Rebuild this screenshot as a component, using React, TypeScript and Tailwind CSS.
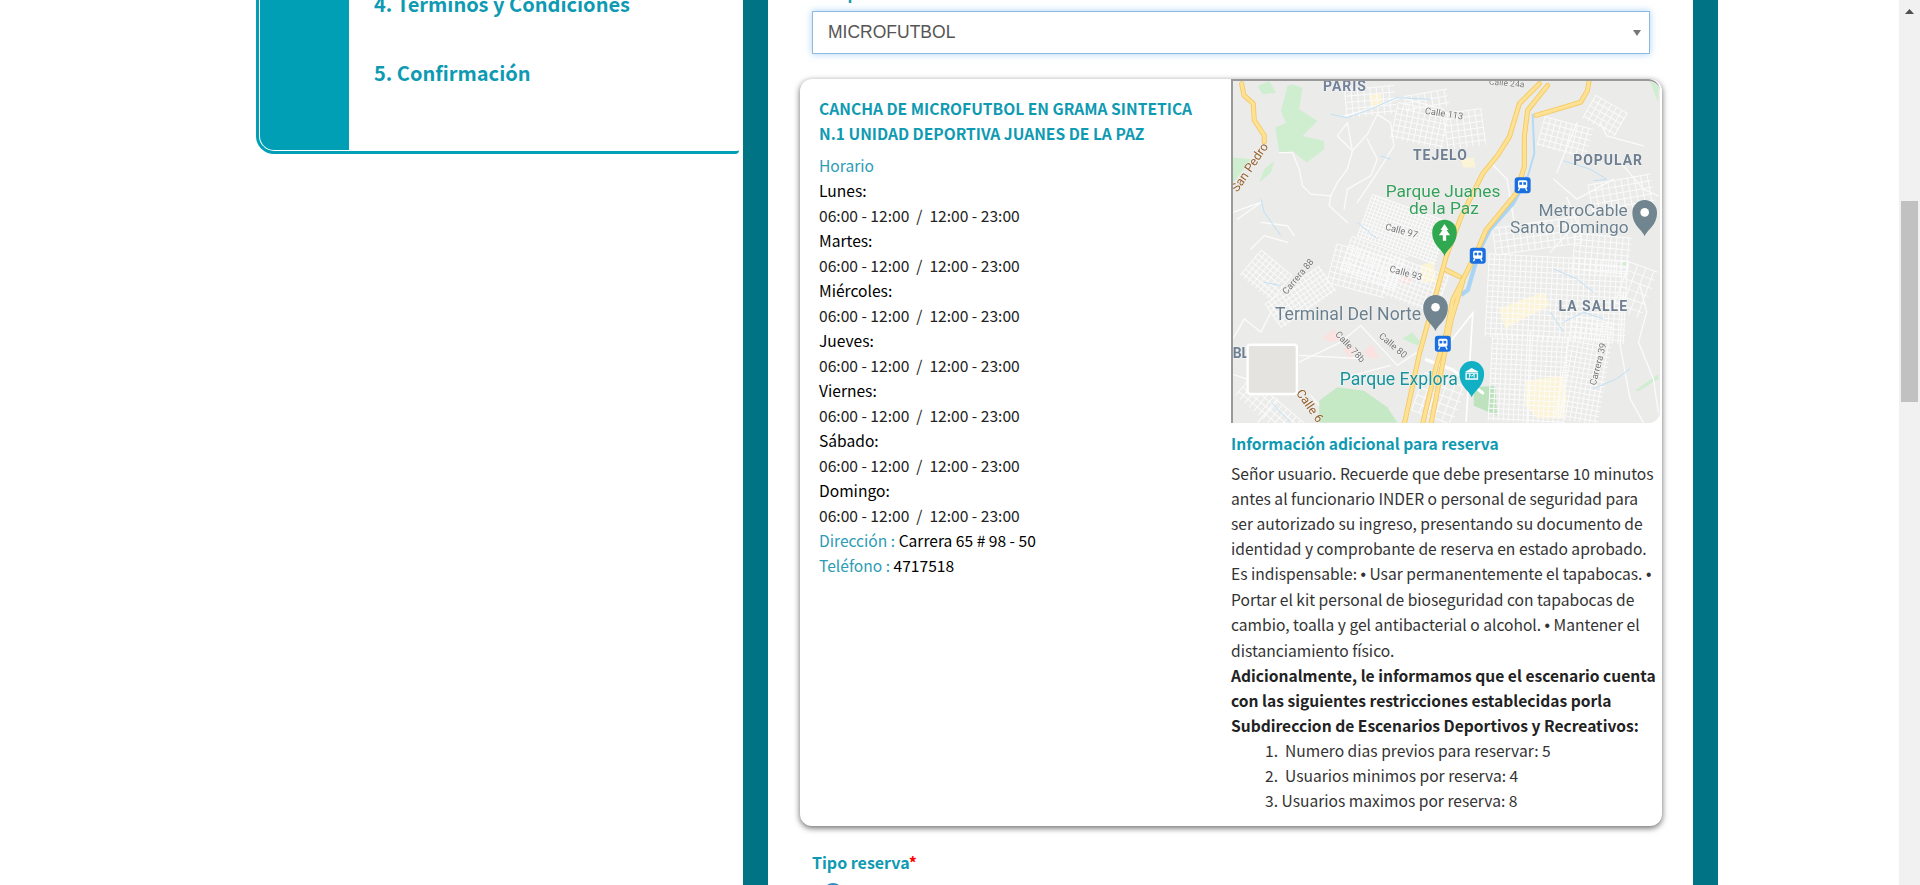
import React from "react";

const days = ["Lunes", "Martes", "Miércoles", "Jueves", "Viernes", "Sábado", "Domingo"];

// [x, y, w, h, rotation, step] in map units (3x pixels)
const grids: number[][] = [
  [345, 25, 150, 85, -5, 19],
  [490, 85, 160, 110, 12, 17],
  [645, 95, 115, 110, -8, 19],
  [525, 40, 130, 50, -10, 20],
  [395, 385, 250, 135, 20, 11],
  [340, 500, 180, 110, 20, 13],
  [470, 560, 170, 120, 20, 14],
  [45, 540, 120, 100, 40, 15],
  [110, 610, 200, 90, -35, 14],
  [300, 516, 180, 120, 15, 17],
  [930, 130, 150, 90, 15, 17],
  [1070, 70, 110, 80, 30, 18],
  [1080, 300, 190, 90, -10, 20],
  [770, 535, 420, 250, 3, 16],
  [780, 770, 230, 262, 3, 15],
  [1000, 720, 130, 312, 10, 15],
  [1030, 470, 170, 120, 5, 18],
  [790, 430, 260, 80, -8, 20],
  [560, 900, 130, 120, 20, 24],
  [10, 960, 220, 70, 40, 18],
  [1170, 560, 90, 150, 20, 26],
];

const whiteRoads = [
  "M145 220 L185 220 L205 270 L215 320 L240 345 L300 350 L320 310 L350 270 L365 215 L350 130 L320 170 L360 210",
  "M5 400 L90 370 L20 420 M90 430 L170 440 L190 470 M60 510 L100 470 L170 490",
  "M300 350 L295 380 L350 430 M365 215 L410 165 L440 105 L480 130 L490 200 L440 280 L380 370",
  "M340 110 L430 85 L510 55 L640 90 M410 180 L440 240 L420 290 L350 330 L340 390",
  "M0 885 L60 905 M205 850 L330 790 L390 740 L500 860 L560 820 M205 830 L400 840 M330 900 L480 860",
  "M280 1000 L240 950 M80 1032 L140 960 M0 790 L40 720 L90 760 L120 700",
  "M1110 130 L1130 170 L1240 200 M1180 260 L1240 330 L1285 350 M1040 130 L980 280",
  "M1010 355 L1040 430 L960 520 M1180 640 L1170 800 L1200 960 L1240 1032",
  "M1230 620 L1250 700 L1225 790 L1270 900 L1285 1000 M780 250 L830 300 L850 420",
  "M900 760 L890 1032 M970 300 L1040 360 L1150 300",
];

const creeks = [
  "M300 105 L350 115 L430 85 L500 55 L600 60",
  "M450 230 L480 240 M1000 245 L1080 270 L1130 300 L1090 305",
  "M90 360 L100 400 L150 470 M100 610 L150 620 M380 430 L440 480",
  "M970 570 L1040 600 L1090 640 M1000 730 L1060 700 L1120 720 M960 700 L1000 760",
  "M1200 870 L1160 900 L1090 930 M120 970 L180 1032",
];

const yellowZones = [
  "M415 50 L450 40 L455 75 L425 85 Z",
  "M805 690 L880 660 L940 640 L960 680 L880 720 L825 750 Z",
  "M885 906 L1000 890 L1010 960 L1000 1020 L920 1020 L885 980 Z",
  "M570 560 L610 545 L615 610 L575 610 Z",
  "M690 240 L730 235 L735 265 L700 265 Z",
];

const highways = [
  "M65 70 L72 105 L100 130 L103 180 L133 225 L133 245",
  "M960 70 L900 130 L870 230 L835 285 L790 340 L725 470 L680 590 L650 700 L600 880 L555 1090",
  "M985 75 L925 150 L915 230 L915 320 L890 400 L800 510 L770 580 L735 650 L700 720 L680 820 L650 920 L610 1090",
  "M730 665 L695 780 L660 960 L635 1090",
  "M950 165 L1020 145 L1085 125 L1105 90 L1110 60",
  "M680 630 L720 650",
];

function Grid({ x, y, w, h, r, step }: { x: number; y: number; w: number; h: number; r: number; step: number }) {
  const cols = Array.from({ length: Math.floor(w / step) + 1 }, (_, i) => i * step);
  const rows = Array.from({ length: Math.floor(h / step) + 1 }, (_, i) => i * step);
  return (
    <g transform={`rotate(${r} ${x + w / 2} ${y + h / 2})`} stroke="#fbfbfb" strokeWidth="3">
      {cols.map((c) => (
        <line key={`c${c}`} x1={x + c} y1={y} x2={x + c} y2={y + h} />
      ))}
      {rows.map((c) => (
        <line key={`r${c}`} x1={x} y1={y + c} x2={x + w} y2={y + c} />
      ))}
    </g>
  );
}

function Pin({ x, y, fill }: { x: number; y: number; fill: string }) {
  return <path d={`M${x} ${y + 72} C${x - 8} ${y + 50} ${x - 37} ${y + 40} ${x - 37} ${y} A37 37 0 1 1 ${x + 37} ${y} C${x + 37} ${y + 40} ${x + 8} ${y + 50} ${x} ${y + 72} Z`} fill={fill} />;
}

function Metro({ x, y }: { x: number; y: number }) {
  return (
    <g>
      <rect x={x - 24} y={y - 24} width="48" height="48" rx="9" fill="#1a6fe0" />
      <rect x={x - 14} y={y - 15} width="28" height="24" rx="5" fill="#fff" />
      <rect x={x - 10} y={y - 9} width="8" height="8" fill="#1a6fe0" />
      <rect x={x + 2} y={y - 9} width="8" height="8" fill="#1a6fe0" />
      <path d={`M${x - 9} ${y + 9} L${x - 13} ${y + 17} M${x + 9} ${y + 9} L${x + 13} ${y + 17}`} stroke="#fff" strokeWidth="4" />
    </g>
  );
}

function MapLabel({ x, y, size, fill, rotate = 0, bold = false, spacing = 0, children }: { x: number; y: number; size: number; fill: string; rotate?: number; bold?: boolean; spacing?: number; children: React.ReactNode }) {
  return (
    <text x={x} y={y} fontSize={size} fill={fill} fontWeight={bold ? 700 : 400} letterSpacing={spacing} transform={rotate ? `rotate(${rotate} ${x} ${y})` : undefined} stroke="#fff" strokeWidth="3" paintOrder="stroke" strokeOpacity="0.55">
      {children}
    </text>
  );
}

function StaticMap() {
  return (
    <div className="h-[344px] w-[429px] overflow-hidden rounded-tr-[12px] rounded-br-[12px] border-t-2 border-l-2 border-[#999999] bg-[#e9e9e8]">
      <svg viewBox="6 6 1284 1026" className="block h-[342px] w-[427px] blur-[0.6px] font-['Roboto',sans-serif]">
        <rect x="0" y="0" width="1290" height="1032" fill="#ebebea" />
        <g fill="#cfeed0">
          <path d="M185 15 L215 25 L205 90 L260 125 L215 170 L280 185 L280 210 L228 250 L185 215 L145 220 L133 145 L165 130 L150 95 L170 20 Z" />
          <path d="M80 20 L115 5 L135 40 L95 45 Z" />
          <path d="M5 235 L60 240 L15 300 L5 310 Z" />
          <path d="M130 245 L120 280 L85 310 L100 270 Z" />
          <path d="M1215 936 L1285 886 L1285 901 L1225 938 Z" />
          <path d="M1260 6 L1285 20 L1285 70 Z" />
          <path d="M515 780 L545 760 L570 790 L560 800 Z" />
          <path d="M1160 560 L1190 545 L1190 562 Z" />
        </g>
        <path d="M730 926 L795 921 L800 1011 L730 981 Z" fill="#bde2bd" />
        <g fill="#f9e2e0">
          <path d="M275 776 L310 751 L330 781 L300 791 Z" />
          <path d="M335 811 L370 801 L365 846 Z" />
          <path d="M395 821 L425 796 L445 836 L420 841 Z" />
          <path d="M505 600 L535 590 L545 610 L520 615 Z" />
        </g>
        <g fill="#fcf4d6">
          {yellowZones.map((d) => (
            <path key={d} d={d} />
          ))}
        </g>
        <g fill="none" stroke="#fbfbfb" strokeLinecap="round" strokeLinejoin="round" strokeWidth="4">
          {whiteRoads.map((d) => (
            <path key={d} d={d} />
          ))}
        </g>
        {grids.map(([x, y, w, h, r, step], i) => (
          <Grid key={i} x={x} y={y} w={w} h={h} r={r} step={step} />
        ))}
        <path d="M265 966 L320 926 L400 936 L470 986 L500 1032 L265 1032 Z" fill="#c5e8c5" />
        <g fill="none" stroke="#bfe0f7" strokeWidth="3">
          {creeks.map((d) => (
            <path key={d} d={d} />
          ))}
        </g>
        <g transform="translate(-33 -57)">
          <path d="M940 160 L945 280 L925 350" fill="none" stroke="#b4daf6" strokeWidth="6" />
          <path d="M925 350 L880 430 L810 510 L780 570 L745 690 L725 705" fill="none" stroke="#a9d4f4" strokeWidth="13" />
          <g fill="none" stroke="#ffffff" strokeWidth="5" strokeLinecap="round">
            <path d="M610 1085 L665 880 L760 760 L740 1085" />
            <path d="M620 900 L700 930 L790 1000" strokeWidth="9" />
          </g>
          <g fill="none" stroke="#f6c65f" strokeLinecap="round" strokeLinejoin="round" strokeWidth="15">
            {highways.map((d) => (
              <path key={d} d={d} />
            ))}
          </g>
          <g fill="none" stroke="#fde293" strokeLinecap="round" strokeLinejoin="round" strokeWidth="10">
            {highways.map((d) => (
              <path key={d} d={d} />
            ))}
          </g>

          <MapLabel x={310} y={92} size={42} fill="#72829a" bold spacing={3}>PARIS</MapLabel>
          <MapLabel x={808} y={72} size={26} fill="#777" rotate={5}>Calle 24a</MapLabel>
          <MapLabel x={615} y={160} size={28} fill="#757575" rotate={9}>Calle 113</MapLabel>
          <MapLabel x={580} y={298} size={42} fill="#6f7f92" bold spacing={3}>TEJELO</MapLabel>
          <MapLabel x={1062} y={313} size={42} fill="#6f7f92" bold spacing={3}>POPULAR</MapLabel>
          <MapLabel x={1018} y={753} size={42} fill="#6f7f92" bold spacing={3}>LA SALLE</MapLabel>
          <MapLabel x={498} y={411} size={52} fill="#35a05a">Parque Juanes</MapLabel>
          <MapLabel x={568} y={463} size={52} fill="#35a05a">de la Paz</MapLabel>
          <MapLabel x={958} y={467} size={52} fill="#6b808e">MetroCable</MapLabel>
          <MapLabel x={872} y={520} size={52} fill="#6b808e">Santo Domingo</MapLabel>
          <MapLabel x={165} y={780} size={53} fill="#6b808e">Terminal Del Norte</MapLabel>
          <MapLabel x={360} y={977} size={53} fill="#16939c">Parque Explora</MapLabel>
          <MapLabel x={52} y={398} size={37} fill="#93602c" rotate={-56}>San Pedro</MapLabel>
          <MapLabel x={228} y={1000} size={37} fill="#93602c" rotate={55}>Calle 6</MapLabel>
          <MapLabel x={495} y={508} size={28} fill="#757575" rotate={15}>Calle 97</MapLabel>
          <MapLabel x={508} y={635} size={28} fill="#757575" rotate={15}>Calle 93</MapLabel>
          <MapLabel x={200} y={705} size={28} fill="#757575" rotate={-50}>Carrera 88</MapLabel>
          <MapLabel x={345} y={825} size={28} fill="#757575" rotate={47}>Calle 78b</MapLabel>
          <MapLabel x={476} y={832} size={28} fill="#757575" rotate={40}>Calle 80</MapLabel>
          <MapLabel x={1130} y={978} size={28} fill="#757575" rotate={-76}>Carrera 39</MapLabel>
          <MapLabel x={38} y={896} size={42} fill="#6f7f92" bold>BL</MapLabel>

          <Pin x={675} y={516} fill="#2fa84f" />
          <path d="M675 492 L687 510 L681 510 L692 526 L680 526 L680 542 L670 542 L670 526 L658 526 L669 510 L663 510 Z" fill="#fff" />
          <Pin x={1277} y={457} fill="#70858f" />
          <circle cx="1277" cy="457" r="13" fill="#fff" />
          <Pin x={648} y={742} fill="#70858f" />
          <circle cx="648" cy="742" r="13" fill="#fff" />
          <Pin x={757} y={941} fill="#12b0c4" />
          <path d="M757 925 L778 937 L736 937 Z" fill="#fff" />
          <path d="M740 940 H774 V958 H740 Z" fill="none" stroke="#fff" strokeWidth="4" />
          <path d="M750 954 V943 L757 950 L764 943 V954" fill="none" stroke="#fff" strokeWidth="3" />
          <Metro x={910} y={375} />
          <Metro x={775} y={587} />
          <Metro x={670} y={852} />
        </g>
        <rect x="50" y="798" width="148" height="148" rx="8" fill="#e5e3df" stroke="#ffffff" strokeWidth="7" />
      </svg>
    </div>
  );
}

const Bullet = () => <span className="font-['Liberation_Sans',sans-serif]">•</span>;

export default function App() {
  return (
    <div className="flex h-[885px] w-full overflow-hidden bg-white font-['Noto_Sans_CJK_SC','Noto_Sans',sans-serif] text-[15.6px] leading-[25px] text-black">
      <div className="flex min-w-0 flex-1 pl-[256px]">
        <aside className="w-[487px] shrink-0">
          <div className="flex h-[154px] w-[483px] overflow-hidden rounded-br-[4px] rounded-bl-[18px] border-b-[3px] border-l-[3px] border-[#009fb5] bg-white">
            <div className="mb-px ml-px h-[150px] w-[89px] shrink-0 rounded-bl-[14px] bg-[#009fb5]" />
            <ul className="-mt-[9px] pl-[25px] text-[20px] font-semibold text-[#0e9ab2]">
              <li className="mb-[44px]">4. Términos y Condiciones</li>
              <li>5. Confirmación</li>
            </ul>
          </div>
        </aside>

        <main className="h-[885px] w-[975px] shrink-0 overflow-hidden border-x-[25px] border-[#007385] bg-white pr-[30px] pl-[32px]">
          <div className="h-[11px] overflow-hidden pl-[12px]">
            <p className="-mt-[20px] text-[16px] font-semibold text-[#0e9ab2]">Campo</p>
          </div>

          <div className="mr-[13px] ml-[12px] flex h-[43px] items-center justify-between border border-[#8db9e2] bg-white pr-[8px] pl-[15px] font-['Liberation_Sans',sans-serif] text-[17.5px] text-[#555555] shadow-[0_0_7px_rgba(102,175,233,0.55)]">
            <span>MICROFUTBOL</span>
            <svg width="8" height="6" viewBox="0 0 8 6" aria-hidden="true">
              <path d="M0 0 H8 L4 6 Z" fill="#777777" />
            </svg>
          </div>

          <section className="mt-[25px] flex h-[747px] w-[862px] rounded-[12px] bg-white shadow-[0_2px_6px_rgba(0,0,0,0.6)]">
            <div className="w-[431px] shrink-0 pt-[17px] pl-[19px]">
              <h2 className="mb-[7px] w-[385px] font-semibold text-[#0e9ab2]">
                CANCHA DE MICROFUTBOL EN GRAMA SINTETICA N.1 UNIDAD DEPORTIVA JUANES DE LA PAZ
              </h2>
              <p className="text-[#2d9cb5]">Horario</p>
              {days.map((day) => (
                <div key={day}>
                  <p>{day}:</p>
                  <p className="text-[#222222]">06:00 - 12:00 &nbsp;/&nbsp; 12:00 - 23:00</p>
                </div>
              ))}
              <p>
                <span className="text-[#2d9cb5]">Dirección : </span>Carrera 65 # 98 - 50
              </p>
              <p>
                <span className="text-[#2d9cb5]">Teléfono : </span>4717518
              </p>
            </div>

            <div className="min-w-0 flex-1">
              <StaticMap />
              <div className="pt-[8px] text-[#333333]">
                <h3 className="mb-[5px] font-semibold text-[#0e9ab2]">Información adicional para reserva</h3>
                <p className="w-[428px]">
                  Señor usuario. Recuerde que debe presentarse 10 minutos antes al funcionario INDER o personal de seguridad para ser autorizado su ingreso, presentando su documento de identidad y comprobante de reserva en estado aprobado. Es indispensable: <Bullet /> Usar permanentemente el tapabocas. <Bullet /> Portar el kit personal de bioseguridad con tapabocas de cambio, toalla y gel antibacterial o alcohol. <Bullet /> Mantener el distanciamiento físico.
                </p>
                <p className="w-[428px] font-bold text-[#222222]">
                  Adicionalmente, le informamos que el escenario cuenta con las siguientes restricciones establecidas porla Subdireccion de Escenarios Deportivos y Recreativos:
                </p>
                <ol className="pl-[34px]">
                  <li>1.&nbsp; Numero dias previos para reservar: 5</li>
                  <li>2.&nbsp; Usuarios minimos por reserva: 4</li>
                  <li>3. Usuarios maximos por reserva: 8</li>
                </ol>
              </div>
            </div>
          </section>

          <div className="mt-[24px] pl-[12px]">
            <p className="text-[16px] font-semibold text-[#0e9ab2]">
              Tipo reserva<span className="text-[#ff0000]">*</span>
            </p>
            <div className="mt-[8px] ml-[11px] h-[20px] w-[20px] rounded-full bg-[#2a8fc7]" />
          </div>
        </main>
      </div>

      <div className="relative h-[885px] w-[21px] shrink-0 bg-[#f1f1f1]">
        <svg className="absolute top-[9px] left-[6px]" width="9" height="5" viewBox="0 0 9 5" aria-hidden="true">
          <path d="M0 5 L4.5 0 L9 5 Z" fill="#505050" />
        </svg>
        <div className="absolute top-[201px] left-[2px] h-[201px] w-[17px] bg-[#c1c1c1]" />
      </div>
    </div>
  );
}
